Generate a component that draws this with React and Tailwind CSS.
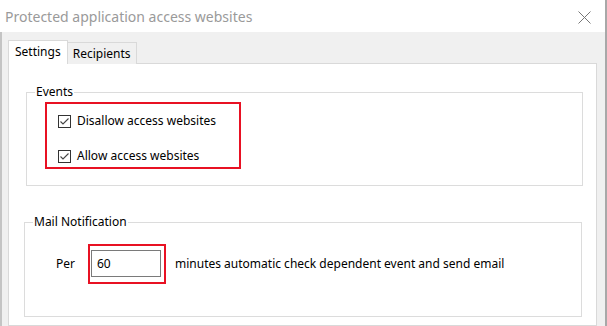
import React from "react";

function Check({ label }) {
  return (
    <label className="flex items-center h-[16px]">
      <span className="w-[13px] h-[13px] border border-[#333333] bg-white flex items-center justify-center shrink-0">
        <svg width="11" height="11" viewBox="0 0 11 11">
          <polyline points="1.5,5.5 4,8 9.5,2.5" fill="none" stroke="#444" strokeWidth="1.1" />
        </svg>
      </span>
      <span className="ml-[6px] text-black">{label}</span>
    </label>
  );
}

export default function App() {
  return (
    <div
      className="w-[607px] h-[326px] overflow-hidden bg-white flex flex-col border-r-2 border-[#a8a8a8]"
      style={{ fontFamily: '"Noto Sans", "Open Sans", sans-serif' }}
    >
      <div className="h-[32px] shrink-0 flex items-center justify-between pl-[5px] pr-[14px]">
        <span className="text-[14px] text-[#9a9a9a] leading-none pt-px">Protected application access websites</span>
        <svg width="13" height="13" viewBox="0 0 13 13" className="mt-[2px]">
          <path d="M0.5 0.5 L12.5 12.5 M12.5 0.5 L0.5 12.5" stroke="#777" strokeWidth="1" />
        </svg>
      </div>
      <div className="flex-1 bg-[#f0f0f0] border-l-2 border-[#c4c4c4] pl-[6px] pr-[8px] pt-[8px] flex flex-col text-[12px] leading-[16px]">
        <div className="flex items-end h-[24px] relative z-10">
          <div className="h-[24px] px-[6px] pt-[3px] bg-white border border-b-0 border-[#d9d9d9] text-black">Settings</div>
          <div className="h-[22px] px-[5px] pt-[3px] bg-[#f0f0f0] border border-l-0 border-b-0 border-[#d9d9d9] text-black">Recipients</div>
        </div>
        <div className="flex-1 bg-white border border-[#d9d9d9] -mt-px pl-[17px] pr-[13px] pt-[20px] flex flex-col">
          <fieldset className="border border-[#dcdcdc] h-[102px]">
            <legend className="ml-[8px] px-[1px] text-black">Events</legend>
            <div className="mt-[2px] ml-[18px] w-[196px] h-[67px] border-2 border-[#e81123] pl-[11px] pt-[9px] flex flex-col gap-[19px]">
              <Check label="Disallow access websites" />
              <Check label="Allow access websites" />
            </div>
          </fieldset>
          <fieldset className="mt-[28px] -ml-[2px] mr-[1px] border border-[#dcdcdc] h-[103px]">
            <legend className="ml-[8px] px-[1px] text-black">Mail Notification</legend>
            <div className="mt-[14px] pl-[31px] flex items-center">
              <span className="text-black w-[32px]">Per</span>
              <div className="w-[78px] h-[40px] border-2 border-[#e81123] pl-[1px] pt-[4px]">
                <div className="w-[70px] h-[27px] border border-[#7a7a7a] flex items-center pl-[5px] text-black">60</div>
              </div>
              <span className="ml-[9px] text-black">minutes automatic check dependent event and send email</span>
            </div>
          </fieldset>
        </div>
      </div>
    </div>
  );
}
